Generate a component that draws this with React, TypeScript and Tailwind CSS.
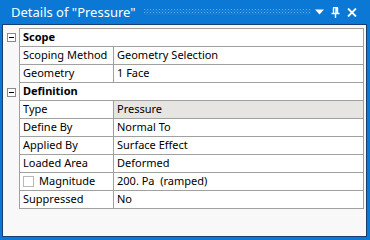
import React from "react";

type Row =
  | { kind: "head"; label: string }
  | { kind: "item"; label: string; value: string; shaded?: boolean; check?: boolean };

const rows: Row[] = [
  { kind: "head", label: "Scope" },
  { kind: "item", label: "Scoping Method", value: "Geometry Selection" },
  { kind: "item", label: "Geometry", value: "1 Face" },
  { kind: "head", label: "Definition" },
  { kind: "item", label: "Type", value: "Pressure", shaded: true },
  { kind: "item", label: "Define By", value: "Normal To" },
  { kind: "item", label: "Applied By", value: "Surface Effect" },
  { kind: "item", label: "Loaded Area", value: "Deformed" },
  { kind: "item", label: "Magnitude", value: "200. Pa  (ramped)", check: true },
  { kind: "item", label: "Suppressed", value: "No" },
];

const Dots = () => (
  <svg className="flex-1 h-[6px] ml-[8px] mr-[4px]" preserveAspectRatio="none">
    <defs>
      <pattern id="dots" width="3" height="3" patternUnits="userSpaceOnUse">
        <rect x="0" y="0" width="1" height="1" fill="#6aaee8" />
        <rect x="1.5" y="1.5" width="1" height="1" fill="#4f9ce0" />
      </pattern>
    </defs>
    <rect width="100%" height="100%" fill="url(#dots)" />
  </svg>
);

const TitleIcons = () => (
  <div className="flex items-center gap-[7px] pr-[10px]">
    <svg width="9" height="6" viewBox="0 0 9 6">
      <path d="M0 0.5 L9 0.5 L4.5 5.5 Z" fill="#fff" />
    </svg>
    <svg width="9" height="11" viewBox="0 0 9 11">
      <path d="M2 0.5 H7 M2.5 0.5 V6 M6.5 0.5 V6 M5 0.5 V6 M0.5 6.5 H8.5 M4.5 6.5 V11" stroke="#fff" strokeWidth="1.4" fill="none" />
    </svg>
    <svg width="10" height="9" viewBox="0 0 10 9">
      <path d="M1 0.5 L9 8.5 M9 0.5 L1 8.5" stroke="#fff" strokeWidth="1.8" />
    </svg>
  </div>
);

const Minus = () => (
  <div className="w-[9px] h-[9px] border border-[#8a8a8a] bg-white flex items-center justify-center">
    <div className="w-[5px] h-px bg-black" />
  </div>
);

export default function App() {
  return (
    <div className="w-[370px] h-[240px] bg-[#0a78d4] flex flex-col pl-[2px] pr-[3px] pb-[3px] font-['Noto_Sans',sans-serif] text-[11px] text-black">
      <div className="h-[24px] flex items-center text-white">
        <span className="pl-[9px] text-[13px] leading-none whitespace-nowrap">Details of "Pressure"</span>
        <Dots />
        <TitleIcons />
      </div>
      <div className="flex-1 border border-[#1a3d70] bg-[#f8f8f8] pt-[3px] pr-[2px]">
        <div className="flex flex-col">
          {rows.map((r, i) => (
            <div key={i} className={"flex " + (i === 0 ? "h-[19px]" : "h-[18px]")}>
              <div className="w-[16px] shrink-0 flex items-center justify-center pl-[1px]">
                {r.kind === "head" ? <Minus /> : null}
              </div>
              <div
                className={
                  "flex-1 flex border-l border-r border-b border-[#a0a0a0] bg-white " +
                  (i === 0 ? "border-t" : "")
                }
              >
                {r.kind === "head" ? (
                  <div className="flex items-center pl-[3px] font-bold">{r.label}</div>
                ) : (
                  <>
                    <div className="w-[94px] shrink-0 overflow-hidden flex items-center pl-[3px] border-r border-[#a0a0a0] whitespace-nowrap">
                      {r.check ? (
                        <>
                          <div className="w-[11px] h-[11px] shrink-0 border border-[#b8b8b8] bg-white mr-[5px]" />
                          {r.label}
                        </>
                      ) : (
                        r.label
                      )}
                    </div>
                    <div
                      className={
                        "flex-1 flex items-center pl-[3px] whitespace-pre " +
                        (r.shaded ? "bg-[#e6e5e1]" : "")
                      }
                    >
                      {r.value}
                    </div>
                  </>
                )}
              </div>
            </div>
          ))}
        </div>
      </div>
    </div>
  );
}
